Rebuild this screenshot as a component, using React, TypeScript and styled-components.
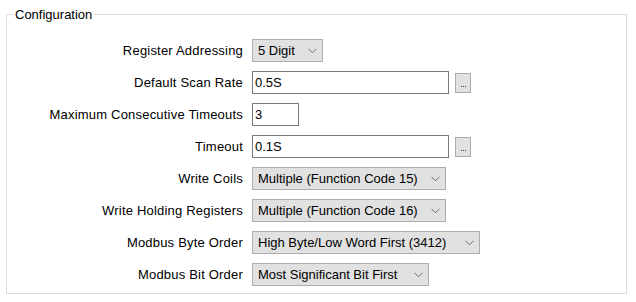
import React from "react";
import styled, { createGlobalStyle } from "styled-components";

const Global = createGlobalStyle`
  html, body { margin: 0; padding: 0; background: #ffffff; }
  body { font-family: "Liberation Sans", Arial, sans-serif; font-size: 13px; color: #000; }
`;

const Page = styled.div`
  width: 636px;
  height: 302px;
  box-sizing: border-box;
  padding: 7px 9px 0 6px;
`;

const Group = styled.fieldset`
  margin: 0;
  padding: 17px 0 7px 0;
  width: 621px;
  box-sizing: border-box;
  border: 1px solid #dcdcdc;
  min-width: 0;
`;

const Legend = styled.legend`
  margin-left: 6px;
  padding: 0 2px;
  font-size: 13px;
  line-height: 15px;
  color: #000;
`;

const Form = styled.div`
  display: grid;
  grid-template-columns: 236px auto;
  column-gap: 9px;
  row-gap: 9px;
  align-items: center;
`;

const Label = styled.div`
  text-align: right;
  line-height: 23px;
  white-space: nowrap;
  letter-spacing: 0.2px;
`;

const Field = styled.div`
  display: flex;
  align-items: center;
  gap: 6px;
  height: 23px;
`;

const TextBox = styled.div<{ $w: number }>`
  width: ${(p) => p.$w}px;
  height: 23px;
  box-sizing: border-box;
  border: 1px solid #7a7a7a;
  background: #fff;
  padding: 0 2px;
  line-height: 21px;
  white-space: nowrap;
`;

const Browse = styled.div`
  width: 16px;
  height: 20px;
  box-sizing: border-box;
  border: 1px solid #adadad;
  background: #e1e1e1;
  display: flex;
  align-items: flex-end;
  justify-content: center;
  padding-bottom: 5px;
`;

const Dots = styled.span`
  display: flex;
  gap: 1px;
`;

const Dot = styled.i`
  width: 1px;
  height: 1px;
  background: #3a3a6a;
`;

const Combo = styled.div<{ $w: number }>`
  width: ${(p) => p.$w}px;
  height: 23px;
  box-sizing: border-box;
  border: 1px solid #adadad;
  background: #e1e1e1;
  display: flex;
  align-items: center;
  justify-content: space-between;
  padding: 0 5px 0 5px;
  white-space: nowrap;
`;

const ComboText = styled.span`
  line-height: 21px;
`;

const Chevron = () => (
  <svg width="9" height="6" viewBox="0 0 9 6">
    <polyline points="0.5,0.8 4.5,4.8 8.5,0.8" fill="none" stroke="#6d6d6d" strokeWidth="1" />
  </svg>
);

const Select = ({ w, value }: { w: number; value: string }) => (
  <Combo $w={w}>
    <ComboText>{value}</ComboText>
    <Chevron />
  </Combo>
);

const BrowseButton = () => (
  <Browse>
    <Dots>
      <Dot />
      <Dot />
      <Dot />
    </Dots>
  </Browse>
);

export default function App() {
  return (
    <Page>
      <Global />
      <Group>
        <Legend>Configuration</Legend>
        <Form>
          <Label>Register Addressing</Label>
          <Field>
            <Select w={71} value="5 Digit" />
          </Field>

          <Label>Default Scan Rate</Label>
          <Field>
            <TextBox $w={197}>0.5S</TextBox>
            <BrowseButton />
          </Field>

          <Label>Maximum Consecutive Timeouts</Label>
          <Field>
            <TextBox $w={47}>3</TextBox>
          </Field>

          <Label>Timeout</Label>
          <Field>
            <TextBox $w={197}>0.1S</TextBox>
            <BrowseButton />
          </Field>

          <Label>Write Coils</Label>
          <Field>
            <Select w={194} value="Multiple (Function Code 15)" />
          </Field>

          <Label>Write Holding Registers</Label>
          <Field>
            <Select w={194} value="Multiple (Function Code 16)" />
          </Field>

          <Label>Modbus Byte Order</Label>
          <Field>
            <Select w={228} value="High Byte/Low Word First (3412)" />
          </Field>

          <Label>Modbus Bit Order</Label>
          <Field>
            <Select w={177} value="Most Significant Bit First" />
          </Field>
        </Form>
      </Group>
    </Page>
  );
}
